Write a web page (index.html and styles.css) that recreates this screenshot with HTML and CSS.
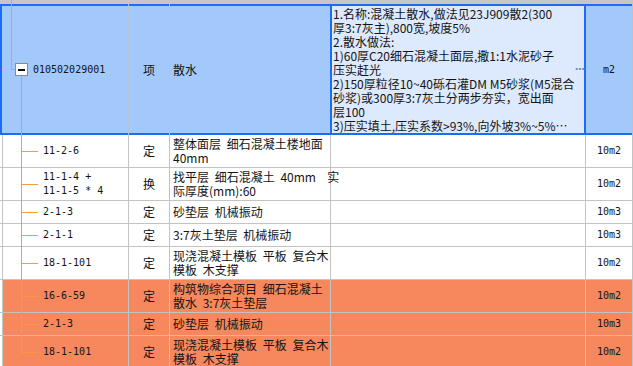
FILE: index.html
```html
<!DOCTYPE html>
<html lang="zh-CN">
<head>
    <meta charset="UTF-8">
    <title>分部分项</title>
    <link rel="stylesheet" href="styles.css">
</head>
<body>
    <div class="sheet">
        <div class="strip"></div>

        <div class="row sel">
            <div class="c0"></div>
            <div class="code parent"><span class="toggle"></span>010502029001</div>
            <div class="type">项</div>
            <div class="name">散水</div>
            <div class="feat">
                <div class="feat-text">
                    <div>1.名称:混凝土散水,做法见23J909散2(300</div>
                    <div>厚3:7灰主),800宽,坡度5%</div>
                    <div>2.散水做法:</div>
                    <div>1)60厚C20细石混凝土面层,撒1:1水泥砂子</div>
                    <div>压实赶光</div>
                    <div>2)150厚粒径10~40砾石灌DM M5砂浆(M5混合</div>
                    <div>砂浆)或300厚3:7灰土分两步夯实，宽出面</div>
                    <div>层100</div>
                    <div>3)压实填土,压实系数&gt;93%,向外坡3%~5%⋯</div>
                </div>
                <span class="more">···</span>
            </div>
            <div class="unit">m2</div>
        </div>

        <div class="row">
            <div class="c0"></div>
            <div class="code child">11-2-6</div>
            <div class="type">定</div>
            <div class="name"><span>整体面层 细石混凝土楼地面<br>40mm</span></div>
            <div class="feat"></div>
            <div class="unit">10m2</div>
        </div>

        <div class="row">
            <div class="c0"></div>
            <div class="code child"><span>11-1-4 +<br>11-1-5 * 4</span></div>
            <div class="type">换</div>
            <div class="name"><span>找平层 细石混凝土 40mm &nbsp;实<br>际厚度(mm):60</span></div>
            <div class="feat"></div>
            <div class="unit">10m2</div>
        </div>

        <div class="row short">
            <div class="c0"></div>
            <div class="code child">2-1-3</div>
            <div class="type">定</div>
            <div class="name">砂垫层 机械振动</div>
            <div class="feat"></div>
            <div class="unit">10m3</div>
        </div>

        <div class="row short">
            <div class="c0"></div>
            <div class="code child">2-1-1</div>
            <div class="type">定</div>
            <div class="name">3:7灰土垫层 机械振动</div>
            <div class="feat"></div>
            <div class="unit">10m3</div>
        </div>

        <div class="row">
            <div class="c0"></div>
            <div class="code child">18-1-101</div>
            <div class="type">定</div>
            <div class="name"><span>现浇混凝土模板 平板 复合木<br>模板 木支撑</span></div>
            <div class="feat"></div>
            <div class="unit">10m2</div>
        </div>

        <div class="row hl">
            <div class="c0"></div>
            <div class="code child">16-6-59</div>
            <div class="type">定</div>
            <div class="name"><span>构筑物综合项目 细石混凝土<br>散水 3:7灰土垫层</span></div>
            <div class="feat"></div>
            <div class="unit">10m2</div>
        </div>

        <div class="row short hl">
            <div class="c0"></div>
            <div class="code child">2-1-3</div>
            <div class="type">定</div>
            <div class="name">砂垫层 机械振动</div>
            <div class="feat"></div>
            <div class="unit">10m3</div>
        </div>

        <div class="row hl">
            <div class="c0"></div>
            <div class="code child last">18-1-101</div>
            <div class="type">定</div>
            <div class="name"><span>现浇混凝土模板 平板 复合木<br>模板 木支撑</span></div>
            <div class="feat"></div>
            <div class="unit">10m2</div>
        </div>
    </div>
</body>
</html>
```

FILE: styles.css
```css
* {
    margin: 0;
    padding: 0;
    box-sizing: border-box;
}

body {
    background: #fff;
    overflow: hidden;
    font-family: "Noto Sans CJK SC", sans-serif;
    font-size: 12px;
    color: #141414;
}

.sheet {
    width: 633px;
}

.strip {
    height: 4px;
    background: #c6c6c6;
}

.row {
    display: grid;
    grid-template-columns: 3px 126px 41px 161px 255px 47px;
    height: 33px;
}

.row.short {
    height: 23px;
}

.row > div {
    display: flex;
    align-items: center;
    white-space: nowrap;
    border-right: 1px solid #c3c3c3;
    border-bottom: 1px solid #c3c3c3;
    line-height: 14px;
}

.code,
.unit {
    font-family: "DejaVu Sans Mono", monospace;
    font-size: 10px;
}

.code {
    position: relative;
    padding-left: 40px;
}

.type,
.unit {
    justify-content: center;
}

.name {
    padding-left: 3px;
    word-spacing: 3px;
}

/* tree connectors */
.child::before {
    content: '';
    position: absolute;
    left: 18px;
    top: -1px;
    bottom: -1px;
    width: 1px;
    background: #f49a44;
}

.child.last::before {
    bottom: auto;
    height: 17px;
}

.child::after {
    content: '';
    position: absolute;
    left: 18px;
    top: 50%;
    width: 17px;
    height: 1px;
    background: #f49a44;
}

.parent {
    padding-left: 30px;
}

.parent::before {
    content: '';
    position: absolute;
    left: 8px;
    top: -4px;
    width: 5px;
    height: 69px;
    border-left: 1px solid #f49a44;
    border-bottom: 1px solid #f49a44;
}

.parent::after {
    content: '';
    position: absolute;
    left: 18px;
    top: 72px;
    bottom: 0;
    width: 1px;
    background: #f49a44;
}

.toggle {
    position: absolute;
    left: 12px;
    top: 59px;
    width: 13px;
    height: 13px;
    background: #fff;
    border: 1px solid #8a8a8a;
}

.toggle::after {
    content: '';
    position: absolute;
    left: 2px;
    top: 5px;
    width: 7px;
    height: 2px;
    background: #111;
}

/* selected item row */
.row.sel {
    height: 131px;
    background: #a2c9fa;
    box-shadow: inset 2px 0 #1a6ef5, inset 0 2px #1a6ef5, inset 0 -2px #1a6ef5;
}

.row.sel > div {
    border-bottom: 0;
    border-right-color: #b3c4da;
}

.row.sel > .c0 {
    border-right: 0;
}

.row.sel > .name {
    border-right-color: #1a6ef5;
}

.row.sel > .feat {
    background: #dde9fd;
    border: 2px solid #1a6ef5;
    border-left-width: 1px;
    padding-left: 1px;
}

.feat-text {
    line-height: 14px;
}

.more {
    margin-left: auto;
    margin-right: 4px;
    color: #6d94cc;
    font-family: "DejaVu Sans", sans-serif;
    font-size: 11px;
    letter-spacing: -1px;
    font-weight: bold;
}

/* highlighted rows */
.row.hl > div:not(.c0) {
    background: #f7875c;
}
```
